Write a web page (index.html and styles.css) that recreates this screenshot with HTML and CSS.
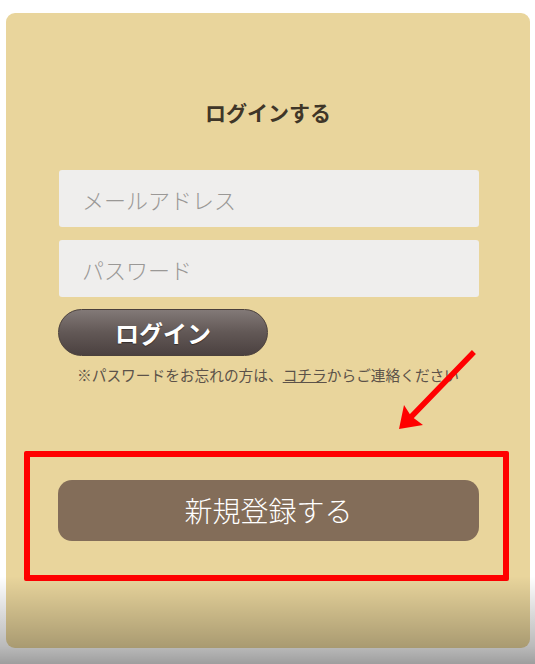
FILE: index.html
```html
<!doctype html>
<html lang="ja">
<head>
  <meta charset="UTF-8">
  <meta name="viewport" content="width=device-width, initial-scale=1.0">
  <title>ログイン</title>
  <link rel="stylesheet" href="styles.css">
</head>
<body>
  <div class="card">
    <h1 class="title">ログインする</h1>
    <form class="login-form" action="#" method="POST">
      <input class="field" type="email" name="email" placeholder="メールアドレス">
      <input class="field" type="password" name="password" placeholder="パスワード">
      <button class="btn-login" type="submit">ログイン</button>
    </form>
    <p class="note">※パスワードをお忘れの方は、<a href="#">コチラ</a>からご連絡ください</p>
    <a class="btn-register" href="#">新規登録する</a>
  </div>

  <!-- annotation overlay -->
  <div class="mark-box"></div>
  <svg class="mark-arrow" width="535" height="664" viewBox="0 0 535 664">
    <line x1="472" y1="354" x2="410" y2="418" stroke="#f00" stroke-width="5.5" stroke-linecap="square"/>
    <polygon points="399,429 404,405 411,416 423,425" fill="#f00"/>
  </svg>
  <div class="shade"></div>
</body>
</html>
```

FILE: styles.css
```css
body {
  margin: 0;
  background: #fff;
  font-family: "Noto Sans CJK JP", "Noto Sans", sans-serif;
  position: relative;
  height: 664px;
  overflow: hidden;
}
.card {
  margin: 13px 5px 0 6px;
  height: 635px;
  box-sizing: border-box;
  padding: 84px 0 0 53px;
  background: #e9d59c;
  border-radius: 9px;
  display: flex;
  flex-direction: column;
}
.title {
  margin: 0 0 43px -53px;
  font-size: 21px;
  line-height: 30px;
  font-weight: bold;
  color: #3f3628;
  text-align: center;
}
.login-form {
  display: flex;
  flex-direction: column;
  gap: 13px;
  width: 420px;
}
.field {
  height: 57px;
  box-sizing: border-box;
  border: none;
  border-radius: 3px;
  background: #efeeed;
  padding: 0 0 0 23px;
  font-family: inherit;
  font-size: 22px;
  font-weight: 300;
  color: #555;
  outline: none;
}
.field::placeholder {
  color: #9a9896;
}
.btn-login {
  margin: -1px 0 0 -1px;
  width: 210px;
  height: 47px;
  border: 1px solid #4a403c;
  border-radius: 24px;
  background: linear-gradient(#827977, #625856 50%, #4b4140);
  color: #fff;
  font-family: inherit;
  font-size: 24px;
  font-weight: bold;
  line-height: 1;
  text-shadow: 0 1px 1px rgba(0, 0, 0, 0.4);
  cursor: pointer;
}
.note {
  margin: 9px 0 0 -53px;
  font-size: 14.7px;
  line-height: 20px;
  color: #5c5249;
  text-align: center;
}
.note a {
  color: inherit;
}
.btn-register {
  margin: 95px 0 0 -1px;
  width: 421px;
  height: 61px;
  border-radius: 14px;
  background: #836d59;
  color: #fff;
  font-size: 28px;
  font-weight: 300;
  line-height: 61px;
  text-align: center;
  text-decoration: none;
}
.mark-box {
  position: absolute;
  left: 24px;
  top: 451px;
  width: 485px;
  height: 130px;
  box-sizing: border-box;
  border: 6.5px solid #f00;
  border-radius: 2px;
}
.mark-arrow {
  position: absolute;
  left: 0;
  top: 0;
}
.shade {
  position: absolute;
  left: 0;
  right: 0;
  top: 576px;
  bottom: 0;
  background: linear-gradient(rgba(0, 0, 0, 0), rgba(0, 0, 0, 0.27) 80%, rgba(0, 0, 0, 0.38));
  pointer-events: none;
}
```
